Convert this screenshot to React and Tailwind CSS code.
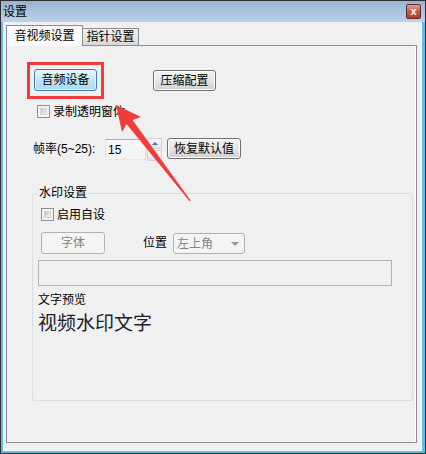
import React from "react";

const font = { fontFamily: '"Liberation Sans", "Noto Sans CJK SC", sans-serif' };

function CheckBox() {
  return (
    <div className="w-[13px] h-[13px] border border-[#8e8f8f] bg-[#f4f4f4] p-[2px] shrink-0">
      <div className="w-full h-full bg-gradient-to-br from-[#c6c6c6] to-[#f2f2f2] border border-[#d4d4d4]" />
    </div>
  );
}

function Button({ children, className = "" }) {
  return (
    <div
      className={
        "flex items-center justify-center rounded-[3px] border border-[#707070] text-[12px] leading-none text-black bg-gradient-to-b from-[#f2f2f2] via-[#e6e6e6] to-[#d0d0d0] shadow-[inset_0_0_0_1px_#fcfcfc] " +
        className
      }
    >
      {children}
    </div>
  );
}

function Arrow() {
  return (
    <svg className="absolute left-0 top-0 pointer-events-none" width="426" height="454" viewBox="0 0 426 454">
      <polygon
        fill="#f23c3c"
        points="115,104 140,116 131.5,119 189.6,199.6 188.6,200.3 125.5,123 121,131"
      />
    </svg>
  );
}

export default function App() {
  return (
    <div className="relative w-[426px] h-[454px] border border-[#2f2f2f] bg-[#62bbe8] flex flex-col" style={font}>
      {/* title bar */}
      <div className="h-[21px] flex items-center bg-gradient-to-b from-[#98b3d3] to-[#bed3ea] shrink-0">
        <span className="ml-[2px] text-[12px] leading-none text-black">设置</span>
        <div className="ml-auto mr-[4px] w-[15px] h-[15px] rounded-[2px] border border-[#5b2d2d] bg-gradient-to-b from-[#e0a196] via-[#c9574a] to-[#b5382c] flex items-center justify-center">
          <span className="text-[11px] font-bold leading-none text-white">x</span>
        </div>
      </div>

      {/* client */}
      <div className="flex-1 ml-[2px] mr-[3px] mb-[2px] bg-[#f0f0f0] pt-[3px] pl-[3px] shadow-[inset_-1px_-1px_0_#fdfdfd]">
        {/* tabs */}
        <div className="flex items-end h-[20px]">
          <div className="relative z-10 -mb-px w-[77px] h-[21px] border border-b-0 border-[#898c95] bg-[#fafafa] flex items-start justify-center pt-[4px]">
            <span className="text-[12px] leading-none text-black">音视频设置</span>
          </div>
          <div className="w-[56px] h-[17px] border border-l-0 border-b-0 border-[#898c95] bg-gradient-to-b from-[#f0f0f0] to-[#d9d9d9] flex items-center justify-center">
            <span className="text-[12px] leading-none text-black">指针设置</span>
          </div>
        </div>

        {/* panel */}
        <div className="w-[411px] h-[398px] border border-[#898c95] bg-[#f0f0f0] shadow-[inset_-1px_0_0_#ffffff]">
          {/* buttons row */}
          <div className="flex items-start mt-[23px] pl-[27px]">
            <div className="relative">
              <div className="w-[63px] h-[22px] flex items-center justify-center rounded-[3px] border border-[#3c7fb1] bg-gradient-to-b from-[#eaf6fd] via-[#c4e5f8] to-[#a7d9f5] shadow-[inset_0_0_0_1px_#e4f4fc] text-[12px] leading-none text-black">
                音频设备
              </div>
              <div className="absolute -left-[7px] -top-[7px] -right-[7px] -bottom-[8px] border-[3px] border-[#f23b3b]" />
            </div>
            <Button className="ml-[56px] mt-[1px] w-[63px] h-[21px]">压缩配置</Button>
          </div>

          {/* checkbox row */}
          <div className="flex items-center gap-[3px] mt-[14px] pl-[30px] h-[13px]">
            <CheckBox />
            <span className="text-[12px] leading-none text-black">录制透明窗体</span>
          </div>

          {/* frame rate */}
          <div className="flex items-start mt-[20px] pl-[26px]">
            <span className="w-[72px] h-[22px] flex items-center text-[12px] leading-none text-black">帧率(5~25):</span>
            <div className="mt-[1px] w-[41px] h-[21px] border border-[#abadb3] border-l-[#e2e3ea] border-r-[#dbdfe6] border-b-[#e3e9ef] bg-[#f4f4f4] flex items-center pl-[2px]">
              <span className="text-[12px] leading-none text-black">15</span>
            </div>
            <div className="ml-[1px] w-[15px] h-[23px] flex flex-col gap-[1px]">
              <div className="flex-1 border border-[#d3d3d3] bg-gradient-to-b from-[#f7f7f7] to-[#e4e4e4] flex items-center justify-center">
                <div className="w-0 h-0 border-l-[3px] border-r-[3px] border-b-[3px] border-l-transparent border-r-transparent border-b-[#4d6fa8]" />
              </div>
              <div className="flex-1 border border-[#d3d3d3] bg-gradient-to-b from-[#f7f7f7] to-[#e4e4e4] flex items-center justify-center">
                <div className="w-0 h-0 border-l-[3px] border-r-[3px] border-t-[3px] border-l-transparent border-r-transparent border-t-[#4d6fa8]" />
              </div>
            </div>
            <Button className="ml-[5px] w-[74px] h-[21px]">恢复默认值</Button>
          </div>

          {/* watermark group */}
          <div className="relative ml-[25px] mt-[32px] w-[381px] h-[208px] rounded-[3px] border border-[#d5dfe5]">
            <span className="absolute left-[5px] -top-[8px] px-[1px] bg-[#f0f0f0] text-[12px] leading-[14px] text-black">水印设置</span>

            <div className="flex items-center gap-[3px] mt-[14px] pl-[8px] h-[13px]">
              <CheckBox />
              <span className="text-[12px] leading-none text-black">启用自设</span>
            </div>

            <div className="flex items-center mt-[10px] pl-[8px]">
              <div className="w-[64px] h-[22px] rounded-[3px] border border-[#adb2b5] bg-[#f4f4f4] flex items-center justify-center text-[12px] leading-none text-[#838383]">
                字体
              </div>
              <span className="ml-[38px] text-[12px] leading-none text-black">位置</span>
              <div className="ml-[6px] mt-[2px] w-[72px] h-[21px] rounded-[3px] border border-[#adb2b5] bg-[#f4f4f4] flex items-center pl-[3px] pr-[5px]">
                <span className="text-[12px] leading-none text-[#838383]">左上角</span>
                <div className="ml-auto w-0 h-0 border-l-[4px] border-r-[4px] border-t-[4px] border-l-transparent border-r-transparent border-t-[#9a9a9a]" />
              </div>
            </div>

            <div className="ml-[5px] mt-[6px] w-[354px] h-[26px] border border-[#b5b5b5] bg-[#f0f0f0]" />

            <div className="ml-[5px] mt-[7px] text-[12px] leading-[14px] text-black">文字预览</div>
            <div className="ml-[5px] mt-[6px] text-[19px] leading-[22px] text-[#1c1c2c]">视频水印文字</div>
          </div>
        </div>
      </div>

      <Arrow />
    </div>
  );
}
